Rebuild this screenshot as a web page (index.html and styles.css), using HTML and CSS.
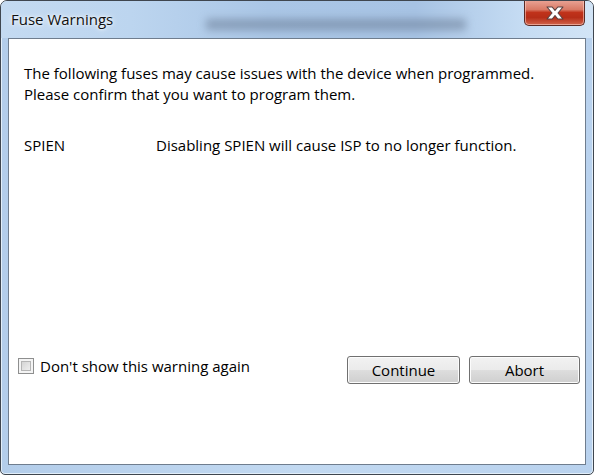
FILE: index.html
```html
<!DOCTYPE html>
<html>
<head>
<meta charset="utf-8">
<link rel="stylesheet" href="styles.css">
</head>
<body>
<div class="window">
  <div class="titlebar">
    <div class="glass-blur"></div>
    <span class="title">Fuse Warnings</span>
    <div class="close">
      <svg width="22" height="16" viewBox="0 0 22 16">
        <path d="M3 2 L8.2 2 L11 5.4 L13.8 2 L19 2 L14 8 L19 14 L13.8 14 L11 10.6 L8.2 14 L3 14 L8 8 Z" fill="#ffffff" stroke="#5a4040" stroke-width="1.1" stroke-linejoin="round"/>
      </svg>
    </div>
  </div>
  <div class="client">
    <p class="intro">The following fuses may cause issues with the device when programmed.<br>Please confirm that you want to program them.</p>
    <div class="fuse-row">
      <span class="fuse-name">SPIEN</span>
      <span class="fuse-desc">Disabling SPIEN will cause ISP to no longer function.</span>
    </div>
    <div class="footer">
      <label class="check">
        <span class="box"></span>
        <span class="check-label">Don't show this warning again</span>
      </label>
      <div class="buttons">
        <button class="btn btn-continue">Continue</button>
        <button class="btn btn-abort">Abort</button>
      </div>
    </div>
  </div>
</div>
</body>
</html>
```

FILE: styles.css
```css
html, body {
  margin: 0;
  padding: 0;
  background: #ffffff;
}

body {
  width: 594px;
  height: 475px;
  overflow: hidden;
  font-family: "Open Sans", "Noto Sans", "Liberation Sans", sans-serif;
  color: #000;
}

.window {
  box-sizing: border-box;
  width: 594px;
  height: 475px;
  border: 1px solid #3f464f;
  border-radius: 7px 7px 5px 5px;
  background: linear-gradient(90deg, #b3cdea 0%, #c2d9f1 50%, #b9d2ee 100%);
  display: flex;
  flex-direction: column;
  overflow: hidden;
  box-shadow: inset 0 0 0 1px #e2eef9;
}

.titlebar {
  position: relative;
  height: 37px;
  flex: none;
  display: flex;
  align-items: flex-start;
  background: linear-gradient(90deg, #c4daf1 0%, #bcd5ef 22%, #aac6e6 45%, #a7c3e4 70%, #c5dcf3 88%, #d2e4f6 100%);
}

.glass-blur {
  position: absolute;
  left: 205px;
  top: 18px;
  width: 260px;
  height: 11px;
  background: #607189;
  opacity: 0.5;
  filter: blur(4px);
}

.title {
  position: relative;
  margin: 8px 0 0 10px;
  font-size: 15px;
  line-height: 20px;
  color: #101010;
  text-shadow: 0 0 6px #ffffff, 0 0 3px #ffffff;
}

.close {
  position: relative;
  margin-left: auto;
  margin-right: 8px;
  margin-top: -1px;
  box-sizing: border-box;
  width: 61px;
  height: 26px;
  border: 1px solid #5b2a24;
  border-top: none;
  border-radius: 0 0 5px 5px;
  background: linear-gradient(180deg, #eaa597 0%, #d97a66 38%, #c0321b 50%, #b62d18 70%, #d1644b 100%);
  box-shadow: inset 0 0 0 1px rgba(255, 215, 205, 0.55);
  display: flex;
  align-items: center;
  justify-content: center;
}

.close svg {
  display: block;
  margin-top: 1px;
}

.client {
  box-sizing: border-box;
  margin: 0 7px 0 7px;
  height: 427px;
  flex: none;
  background: #ffffff;
  border: 1px solid #6f7d8e;
  display: flex;
  flex-direction: column;
  padding: 0 5px 80px 15px;
  font-size: 15px;
}

.intro {
  margin: 24px 0 0 0;
  line-height: 21px;
}

.fuse-row {
  margin-top: 30px;
  display: flex;
  line-height: 21px;
}

.fuse-name {
  width: 132px;
  flex: none;
}

.footer {
  margin-top: auto;
  display: flex;
  align-items: flex-start;
  justify-content: space-between;
}

.check {
  display: flex;
  align-items: center;
  margin-top: 2px;
  margin-left: -6px;
}

.box {
  box-sizing: border-box;
  width: 16px;
  height: 16px;
  border: 1px solid #8e8f8f;
  background: linear-gradient(135deg, #cbcbcb 0%, #e6e6e6 60%, #f6f6f6 100%);
  box-shadow: inset 0 0 0 2px #f4f4f4, inset 0 0 0 3px #b5b5b5;
}

.check-label {
  margin-left: 6px;
  line-height: 16px;
}

.buttons {
  display: flex;
  gap: 9px;
}

.btn {
  box-sizing: border-box;
  height: 28px;
  border: 1px solid #707070;
  border-radius: 3px;
  font-family: inherit;
  font-size: 15px;
  color: #000;
  padding: 0;
  background: linear-gradient(180deg, #f2f2f2 0%, #ebebeb 48%, #dddddd 52%, #cfcfcf 100%);
  box-shadow: inset 0 0 0 1px #fcfcfc;
}

.btn-continue {
  width: 113px;
}

.btn-abort {
  width: 111px;
}
```
